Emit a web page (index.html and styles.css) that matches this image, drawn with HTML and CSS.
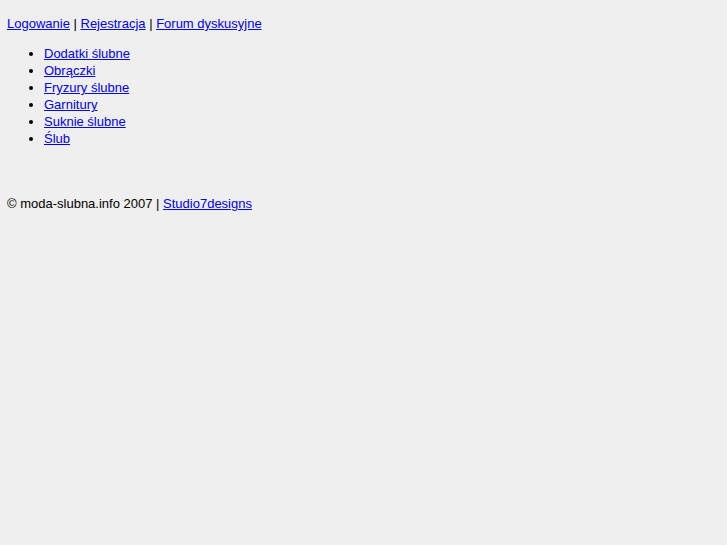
FILE: index.html
```html
<!DOCTYPE html>
<html lang="pl">
<head>
<meta charset="utf-8">
<title>moda-slubna.info</title>
<link rel="stylesheet" href="styles.css">
</head>
<body>
<div class="top"><a href="#">Logowanie</a> | <a href="#">Rejestracja</a> | <a href="#">Forum dyskusyjne</a></div>
<ul class="menu">
<li><a href="#">Dodatki ślubne</a></li>
<li><a href="#">Obrączki</a></li>
<li><a href="#">Fryzury ślubne</a></li>
<li><a href="#">Garnitury</a></li>
<li><a href="#">Suknie ślubne</a></li>
<li><a href="#">Ślub</a></li>
</ul>
<div class="footer">© moda-slubna.info 2007 | <a href="#">Studio7designs</a></div>
</body>
</html>
```
FILE: styles.css
```css
html { background: #efefef; }
body {
  margin: 0;
  padding: 15px 7px;
  font-family: "Liberation Sans", Arial, sans-serif;
  font-size: 13px;
  line-height: 17px;
  color: #000;
}
a { color: #0000ee; }
.menu {
  margin: 13px 0 48px;
  padding-left: 37px;
}
```
